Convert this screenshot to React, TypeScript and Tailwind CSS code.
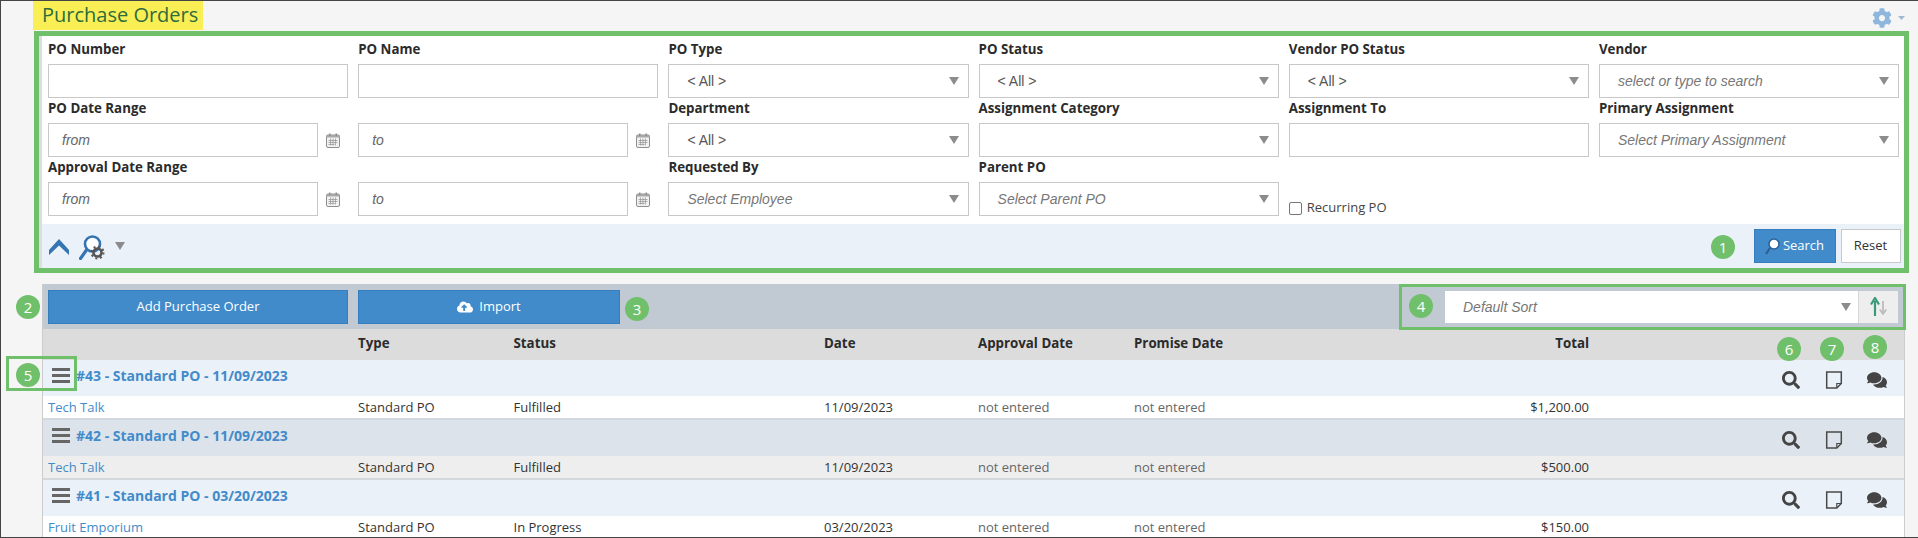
import { FaCloudUploadAlt, FaCog, FaComments, FaSearch } from "react-icons/fa"

const labelClass = "block h-5 mb-[5px] text-[13.3px] leading-5 font-bold text-[#2b2b2b] whitespace-nowrap"
const boxClass = "h-[34px] bg-white border border-[#c8c8c8] flex items-center font-['Liberation_Sans',sans-serif] text-[14px]"

function Caret({ className = "" }: { className?: string }) {
  return (
    <svg width="10" height="8" viewBox="0 0 10 8" className={className}>
      <polygon points="0,0 10,0 5,8" fill="#8c8c8c" />
    </svg>
  )
}

function CalendarIcon() {
  return (
    <svg width="14" height="15" viewBox="0 0 14 15" className="shrink-0">
      <rect x="0.5" y="2" width="13" height="12.5" rx="1.5" fill="#f2f2f2" stroke="#8e8e8e" />
      <rect x="0.5" y="2" width="13" height="2.5" fill="#a8a8a8" />
      <rect x="3" y="0.5" width="1.5" height="2.5" fill="#8e8e8e" />
      <rect x="9.5" y="0.5" width="1.5" height="2.5" fill="#8e8e8e" />
      <path d="M4.5 5.5v7M7 5.5v7M9.5 5.5v7M2.5 7.5h9M2.5 9.5h9M2.5 11.5h6" stroke="#9a9a9a" strokeWidth="0.8" fill="none" />
    </svg>
  )
}

function NoteIcon() {
  return (
    <svg width="20" height="18" viewBox="0 0 20 18">
      <path d="M2.7 1h14.6v11.5L12.8 17H2.7z" fill="none" stroke="#4a4a4a" strokeWidth="1.5" />
      <path d="M17.3 12.5h-4.5V17" fill="none" stroke="#4a4a4a" strokeWidth="1.2" />
    </svg>
  )
}

function Field({ label, children }: { label?: string; children?: React.ReactNode }) {
  return (
    <div className="h-[59px]">
      <span className={labelClass}>{label}</span>
      {children}
    </div>
  )
}

function TextBox({ placeholder }: { placeholder?: string }) {
  return (
    <div className={`${boxClass} w-full px-[13px] italic text-[#666]`}>{placeholder}</div>
  )
}

function SelectBox({ value, hint }: { value?: string; hint?: boolean }) {
  return (
    <div className={`${boxClass} w-full pl-[18px] pr-[9px] justify-between ${hint ? "italic text-[#777]" : "text-[#555]"}`}>
      <span>{value}</span>
      <Caret />
    </div>
  )
}

function DateBox({ placeholder }: { placeholder: string }) {
  return (
    <div className="flex items-center justify-between">
      <div className={`${boxClass} w-[270px] px-[13px] italic text-[#666]`}>{placeholder}</div>
      <div className="w-[30px] flex justify-center pr-[1px]">
        <CalendarIcon />
      </div>
    </div>
  )
}

function Badge({ n, className }: { n: number; className: string }) {
  return (
    <span className={`absolute w-6 h-6 rounded-full bg-[#70bf6b] text-white text-[15px] leading-6 text-center ${className}`}>
      {n}
    </span>
  )
}

const rows = [
  { title: "#43 - Standard PO - 11/09/2023", vendor: "Tech Talk", status: "Fulfilled", date: "11/09/2023", total: "$1,200.00", head: "bg-[#eaf1f9]", body: "bg-white" },
  { title: "#42 - Standard PO - 11/09/2023", vendor: "Tech Talk", status: "Fulfilled", date: "11/09/2023", total: "$500.00", head: "bg-[#dde3ea]", body: "bg-[#eeeeee]" },
  { title: "#41 - Standard PO - 03/20/2023", vendor: "Fruit Emporium", status: "In Progress", date: "03/20/2023", total: "$150.00", head: "bg-[#eaf1f9]", body: "bg-white" },
]

const columns = "grid grid-cols-[310px_155.5px_310.5px_154px_156px_200px_255px] pl-[5px] items-center"

export default function App() {
  return (
    <div className="relative w-[1918px] h-[538px] overflow-hidden bg-[#f5f5f5] border-y border-l border-[#444] font-['Open_Sans',sans-serif] text-[13px] text-[#333]">
      <div className="flex items-start justify-between h-[30px] pl-[32px] pr-[13px]">
        <h1 className="h-[29px] bg-[#f9ef55] pl-[9px] pr-[5px] text-[20px] leading-[28px] text-[#2e6b3e]">Purchase Orders</h1>
        <div className="flex items-center gap-[6px] h-[34px] text-[#8fb6dc]">
          <FaCog size={20} />
          <svg width="7" height="4" viewBox="0 0 7 4"><polygon points="0,0 7,0 3.5,4" fill="#9fb9d3" /></svg>
        </div>
      </div>

      <section className="ml-[32.5px] w-[1875px] h-[242px] border-[5px] border-[#70bf6b]">
        <div className="h-full bg-white border-l-[3px] border-[#dddddd] flex flex-col">
          <div className="grid grid-cols-[repeat(6,300.2px)] gap-x-[10px] pl-[6.5px] pt-[3px]">
            <Field label="PO Number"><TextBox /></Field>
            <Field label="PO Name"><TextBox /></Field>
            <Field label="PO Type"><SelectBox value="< All >" /></Field>
            <Field label="PO Status"><SelectBox value="< All >" /></Field>
            <Field label="Vendor PO Status"><SelectBox value="< All >" /></Field>
            <Field label="Vendor"><SelectBox value="select or type to search" hint /></Field>

            <Field label="PO Date Range"><DateBox placeholder="from" /></Field>
            <Field><DateBox placeholder="to" /></Field>
            <Field label="Department"><SelectBox value="< All >" /></Field>
            <Field label="Assignment Category"><SelectBox /></Field>
            <Field label="Assignment To"><TextBox /></Field>
            <Field label="Primary Assignment"><SelectBox value="Select Primary Assignment" hint /></Field>

            <Field label="Approval Date Range"><DateBox placeholder="from" /></Field>
            <Field><DateBox placeholder="to" /></Field>
            <Field label="Requested By"><SelectBox value="Select Employee" hint /></Field>
            <Field label="Parent PO"><SelectBox value="Select Parent PO" hint /></Field>
            <div className="h-[59px] flex items-end">
              <label className="flex items-center gap-[5px] h-[16px] text-[#444]">
                <span className="w-[13px] h-[13px] rounded-[2px] border border-[#767676] bg-white" />
                Recurring PO
              </label>
            </div>
            <div />
          </div>

          <div className="mt-[8px] h-[44px] bg-[#eaf1f9] flex items-center justify-between pl-[7px] pr-[3px]">
            <div className="flex items-center">
              <svg width="20" height="17" viewBox="0 0 20 17" className="mt-[2px]">
                <polygon points="10,0 20,11 20,16 10,6.5 0,16 0,11" fill="#3574b3" />
              </svg>
              <svg width="27" height="25" viewBox="0 0 27 25" className="ml-[10px] mt-[2px]">
                <circle cx="13.5" cy="9" r="7.5" fill="#ffffff" stroke="#3574b3" strokeWidth="2.6" />
                <line x1="7.5" y1="15" x2="1.5" y2="23.5" stroke="#3574b3" strokeWidth="3.2" strokeLinecap="round" />
                <circle cx="18.5" cy="17.5" r="4" fill="none" stroke="#555" strokeWidth="2.6" />
                <circle cx="18.5" cy="17.5" r="6" fill="none" stroke="#555" strokeWidth="2" strokeDasharray="2 2.7" />
              </svg>
              <Caret className="ml-[9px] -mt-[1px]" />
            </div>
            <div className="flex items-center">
              <button className="w-[82px] h-[34px] bg-[#428bca] border border-[#357ebd] text-white flex items-center justify-center gap-[3px]">
                <svg width="15" height="17" viewBox="0 0 15 17">
                  <circle cx="9" cy="6" r="5" fill="#ffffff" stroke="#2a5f94" strokeWidth="1.5" />
                  <line x1="5" y1="10" x2="1" y2="16" stroke="#2a5f94" strokeWidth="2.2" />
                </svg>
                Search
              </button>
              <button className="ml-[5px] w-[60px] h-[34px] bg-white border border-[#c8c8c8] text-[#333]">Reset</button>
            </div>
          </div>
        </div>
      </section>

      <section className="mt-[11px] ml-[41px] w-[1863px] border-x border-[#cccccc]">
        <div className="h-[45px] bg-[#c1c9d3] flex items-start justify-between pl-[5px] pr-[6px] pt-[6px]">
          <div className="flex gap-[10px]">
            <button className="w-[300px] h-[34px] bg-[#428bca] border border-[#357ebd] text-white">Add Purchase Order</button>
            <button className="w-[262px] h-[34px] bg-[#428bca] border border-[#357ebd] text-white flex items-center justify-center gap-[6px]">
              <FaCloudUploadAlt size={16} />
              Import
            </button>
          </div>
          <div className="flex h-[32px] mt-[1px]">
            <div className="w-[413px] bg-white pl-[18px] pr-[7px] flex items-center justify-between font-['Liberation_Sans',sans-serif] text-[14px] italic text-[#777]">
              Default Sort
              <Caret />
            </div>
            <div className="w-[40px] bg-[#eeeeee] border-l border-[#d8d8d8] flex items-center justify-center">
              <svg width="18" height="20" viewBox="0 0 18 20">
                <path d="M5 19V4M1 7.5 5 1l4 6.5" fill="none" stroke="#3a9a78" strokeWidth="2.2" />
                <path d="M13 4v12M9.8 12.5 13 17l3.2-4.5" fill="none" stroke="#bdbdbd" strokeWidth="1.8" />
              </svg>
            </div>
          </div>
        </div>

        <div className={`${columns} h-[31px] pb-[2px] bg-[#dcdcdc] text-[13.3px] font-bold text-[#2b2b2b]`}>
          <span />
          <span>Type</span>
          <span>Status</span>
          <span>Date</span>
          <span>Approval Date</span>
          <span>Promise Date</span>
          <span className="text-right">Total</span>
        </div>

        {rows.map((row, i) => (
          <div key={row.title}>
            <div className={`h-[36px] flex justify-between pl-[9px] pr-[17px] ${row.head}`}>
              <div className="flex items-center gap-[6px] h-[31px]">
                <svg width="18" height="15" viewBox="0 0 18 15">
                  <path d="M0 1.5h18M0 7.5h18M0 13.5h18" stroke="#666666" strokeWidth="3" />
                </svg>
                <a className="text-[14px] font-bold text-[#428bca]">{row.title}</a>
              </div>
              <div className="flex items-center gap-[23px] h-[40px] text-[#444]">
                <FaSearch size={18} className="w-5 ml-[1px]" />
                <NoteIcon />
                <FaComments size={20} className="w-5" />
              </div>
            </div>
            <div className={`${columns} h-[24px] ${row.body} ${i < 2 ? "shadow-[inset_0_-2px_0_#d3d8de]" : ""}`}>
              <a className="text-[#428bca]">{row.vendor}</a>
              <span>Standard PO</span>
              <span>{row.status}</span>
              <span>{row.date}</span>
              <span className="text-[#666]">not entered</span>
              <span className="text-[#666]">not entered</span>
              <span className="text-right">{row.total}</span>
            </div>
          </div>
        ))}
      </section>

      {/* call-out markers drawn over the page */}
      <div className="absolute left-[1398px] top-[283px] w-[507px] h-[46px] border-[3px] border-[#70bf6b]" />
      <div className="absolute left-[5px] top-[355px] w-[71px] h-[35px] border-[3px] border-[#70bf6b]" />
      <Badge n={1} className="left-[1710px] top-[234px]" />
      <Badge n={2} className="left-[15px] top-[294px]" />
      <Badge n={3} className="left-[624px] top-[296px]" />
      <Badge n={4} className="left-[1408px] top-[293px]" />
      <Badge n={5} className="left-[15px] top-[362px]" />
      <Badge n={6} className="left-[1776px] top-[336px]" />
      <Badge n={7} className="left-[1819px] top-[336px]" />
      <Badge n={8} className="left-[1862px] top-[334px]" />
    </div>
  )
}
